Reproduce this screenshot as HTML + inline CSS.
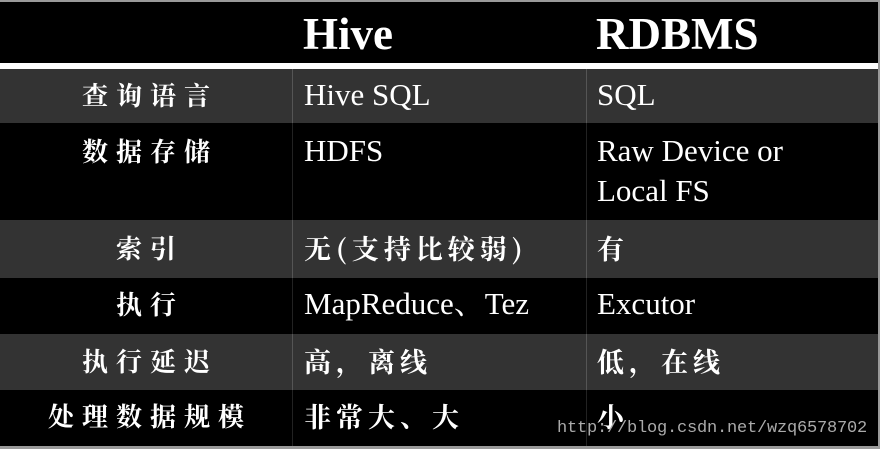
<!DOCTYPE html>
<html><head><meta charset="utf-8"><style>
*{margin:0;padding:0;box-sizing:border-box}
body{width:880px;height:449px;background:#9a9a9a;position:relative;overflow:hidden;font-family:"Liberation Serif","Noto Serif CJK SC",serif;color:#fff}
.r{position:absolute;left:0;width:878px}
.g{background:#333}.b{background:#000}
.c{position:absolute;top:0;bottom:0}
.l{left:0;width:292px;text-align:center;font-family:"Noto Serif CJK SC",serif;font-weight:bold;font-size:26px;letter-spacing:8px;padding-left:8px}
.h{left:292px;width:294px;padding-left:11px;font-size:31px;border-left:1px solid #555}
.d{left:586px;width:292px;padding-left:10px;font-size:31px;border-left:1px solid #555}
.b .h,.b .d{border-left-color:#222}
.cj{font-family:"Noto Serif CJK SC",serif;font-weight:bold;font-size:27px;letter-spacing:5px}
</style></head><body>
<div class="r b" style="top:2px;height:61px">
<div class="c h" style="border:none;font-weight:bold;font-size:45px;line-height:64px;">Hive</div>
<div class="c d" style="border:none;font-weight:bold;font-size:45px;line-height:64px;">RDBMS</div>
</div>
<div class="r" style="top:63px;height:6px;background:#fff"></div>
<div class="r g" style="top:69px;height:54px;line-height:52px">
<div class="c l">查询语言</div><div class="c h">Hive SQL</div><div class="c d">SQL</div></div>
<div class="r b" style="top:123px;height:97px;line-height:40px">
<div class="c l" style="padding-top:8px">数据存储</div><div class="c h" style="padding-top:8px">HDFS</div><div class="c d" style="padding-top:8px">Raw Device or<br>Local FS</div></div>
<div class="r g" style="top:220px;height:58px;line-height:56px">
<div class="c l">索引</div><div class="c h cj">无(支持比较弱)</div><div class="c d cj">有</div></div>
<div class="r b" style="top:278px;height:56px;line-height:52px">
<div class="c l">执行</div><div class="c h">MapReduce、Tez</div><div class="c d">Excutor</div></div>
<div class="r g" style="top:334px;height:56px;line-height:54px">
<div class="c l">执行延迟</div><div class="c h cj">高，离线</div><div class="c d cj">低，在线</div></div>
<div class="r b" style="top:390px;height:56px;line-height:52px">
<div class="c l">处理数据规模</div><div class="c h cj">非常大、大</div><div class="c d cj">小</div></div>
<div style="position:absolute;left:557px;top:419px;font-family:'Liberation Mono',monospace;font-size:17px;color:#aaa;letter-spacing:-0.2px">http://blog.csdn.net/wzq6578702</div>
</body></html>
